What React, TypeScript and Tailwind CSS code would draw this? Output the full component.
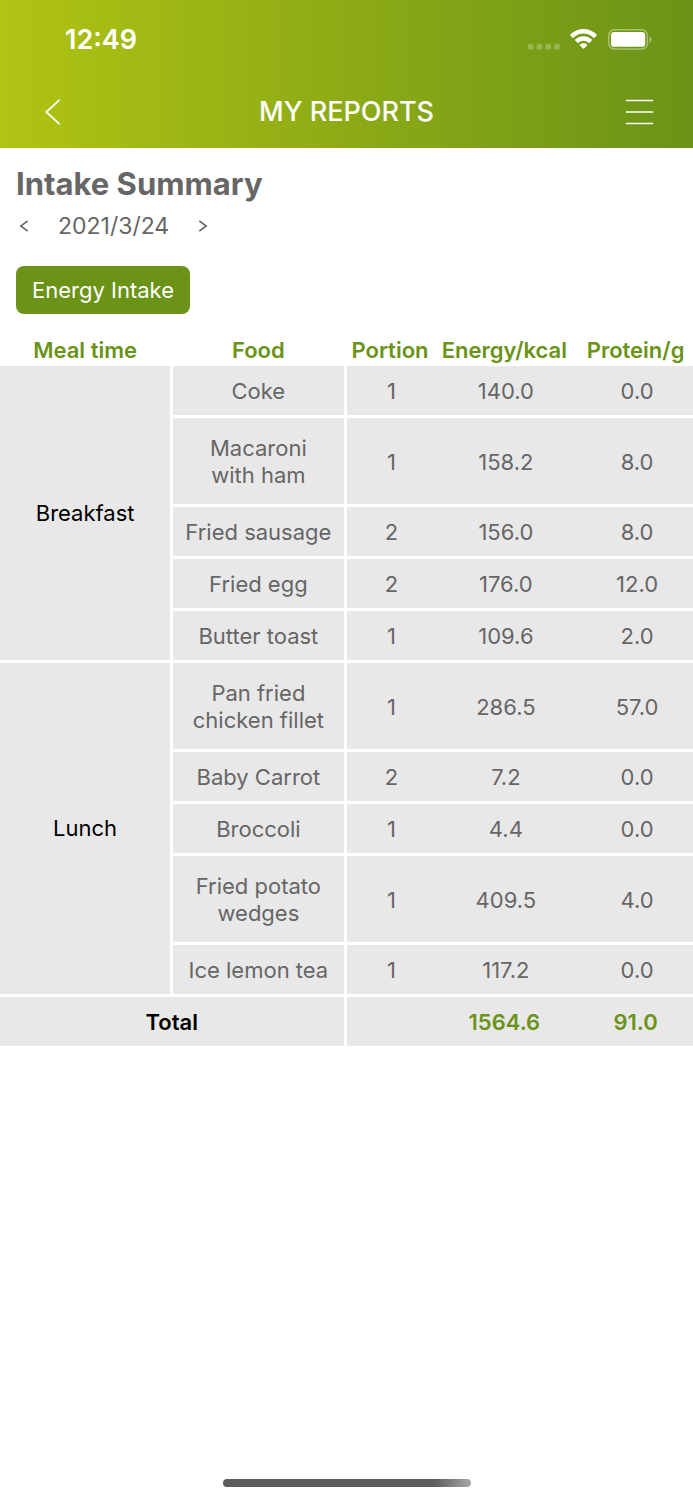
import { Fragment, useState } from 'react';
import clsx from 'clsx';

interface FoodItem {
  name: string;
  portion: number;
  energy: number;
  protein: number;
  tall?: boolean;
}

interface Meal {
  name: string;
  items: FoodItem[];
}

const meals: Meal[] = [
  {
    name: 'Breakfast',
    items: [
      { name: 'Coke', portion: 1, energy: 140, protein: 0 },
      { name: 'Macaroni with\u00a0ham', portion: 1, energy: 158.2, protein: 8, tall: true },
      { name: 'Fried sausage', portion: 2, energy: 156, protein: 8 },
      { name: 'Fried egg', portion: 2, energy: 176, protein: 12 },
      { name: 'Butter toast', portion: 1, energy: 109.6, protein: 2 },
    ],
  },
  {
    name: 'Lunch',
    items: [
      { name: 'Pan fried chicken fillet', portion: 1, energy: 286.5, protein: 57, tall: true },
      { name: 'Baby Carrot', portion: 2, energy: 7.2, protein: 0 },
      { name: 'Broccoli', portion: 1, energy: 4.4, protein: 0 },
      { name: 'Fried potato wedges', portion: 1, energy: 409.5, protein: 4, tall: true },
      { name: 'Ice lemon tea', portion: 1, energy: 117.2, protein: 0 },
    ],
  },
];

const cell = 'bg-[#e8e8e8] border-white border-b-[3px]';
const valueCell = 'bg-[#e8e8e8] border-white border-b-[3px] pt-[2px]';
const headCell = 'p-0 pr-[3px] pb-[2px] font-semibold';

function formatDate(d: Date) {
  return `${d.getFullYear()}/${d.getMonth() + 1}/${d.getDate()}`;
}

function StatusBar() {
  return (
    <div className="flex items-center justify-between h-20 pl-[65px] pr-[41px]">
      <span className="text-[27px] leading-8 font-semibold">12:49</span>
      <div className="flex items-center">
        <svg width="32" height="22" viewBox="0 0 32 22" className="mr-[10px]" fill="#fff" fillOpacity="0.25">
          <rect x="0" y="15" width="5.6" height="5.6" rx="1.6" />
          <rect x="8.7" y="15" width="5.6" height="5.6" rx="1.6" />
          <rect x="17.4" y="15" width="5.6" height="5.6" rx="1.6" />
          <rect x="26.1" y="15" width="5.6" height="5.6" rx="1.6" />
        </svg>
        <svg width="27" height="22" viewBox="0 0 27 22" className="mr-[11px]" fill="#fff">
          <path d="M13.5 0C8.5 0 3.800 2 .3 5.500c-.3.3-.3.7 0 1l2.200 2.200c.3.3.7.3 1 0C6.200 6 9.700 4.500 13.500 4.500s7.300 1.500 10 4.200c.3.300.7.300 1 0l2.200-2.200c.3-.3.3-.7 0-1C23.200 2 18.500 0 13.500 0Z" />
          <path d="M13.500 7.200c-3.200 0-6.100 1.200-8.300 3.300-.3.300-.3.700 0 1l2.300 2.200c.3.300.7.300 1 0 1.300-1.200 3.100-2 5-2s3.700.8 5 2c.3.300.7.300 1 0l2.300-2.200c.3-.3.3-.7 0-1C19.600 8.400 16.700 7.200 13.500 7.200Z" />
          <path d="M13.500 14.200c-1.400 0-2.600.5-3.600 1.300-.3.300-.3.700 0 1l3.100 3.100c.3.300.7.300 1 0l3.100-3.100c.3-.3.3-.7 0-1-1-.8-2.200-1.300-3.600-1.300Z" />
        </svg>
        <svg width="44" height="22" viewBox="0 0 44 22">
          <rect x="0.8" y="0.8" width="38.6" height="19.2" rx="5.6" fill="none" stroke="#fff" strokeOpacity="0.4" strokeWidth="1.5" />
          <rect x="3" y="3" width="34.2" height="14.8" rx="3.4" fill="#fff" />
          <path d="M41.6 7.400v6.400c1.200-.5 2-1.700 2-3.200s-.8-2.700-2-3.200Z" fill="#fff" fillOpacity="0.45" />
        </svg>
      </div>
    </div>
  );
}

export default function App() {
  const [date, setDate] = useState(new Date(2021, 2, 24));

  function moveDay(days: number) {
    setDate(new Date(date.getFullYear(), date.getMonth(), date.getDate() + days));
  }

  const allItems = meals.flatMap(m => m.items);
  const totalEnergy = allItems.reduce((sum, i) => sum + i.energy, 0);
  const totalProtein = allItems.reduce((sum, i) => sum + i.protein, 0);

  return (
    <div
      className="min-h-screen flex flex-col bg-white text-[#666666]"
      style={{ fontFamily: 'Inter, "Liberation Sans", sans-serif' }}
    >
      <header className="h-[148px] text-white bg-linear-to-r from-[#b1c313] to-[#6a9317]">
        <StatusBar />
        <div className="grid grid-cols-3 items-center h-16 px-[39px]">
          <button type="button" aria-label="Back" className="justify-self-start pl-[5px]">
            <svg width="18" height="28" viewBox="0 0 18 28" fill="none" stroke="#fff" strokeWidth="1.7">
              <path d="M15.6 1.8 2.2 14l13.4 12.2" />
            </svg>
          </button>
          <h1 className="text-[27px] leading-8 font-medium text-center whitespace-nowrap">MY REPORTS</h1>
          <button type="button" aria-label="Menu" className="justify-self-end">
            <svg width="29" height="28" viewBox="0 0 29 28" fill="none" stroke="#fff" strokeWidth="1.7" strokeLinecap="round">
              <path d="M1.5 2.5h26M1.5 14h26M1.5 25.5h26" />
            </svg>
          </button>
        </div>
      </header>

      <main>
        <div className="px-4 pt-[18px]">
          <h2 className="text-[31px] leading-9 font-bold">Intake Summary</h2>
          <div className="flex items-center mt-2 h-8">
            <button type="button" aria-label="Previous day" className="w-4 h-8 flex items-center justify-center" onClick={() => moveDay(-1)}>
              <svg width="10" height="12" viewBox="0 0 10 12" fill="none" stroke="currentColor" strokeWidth="1.6">
                <path d="M8.7.8 1.800 6l6.900 5.200" />
              </svg>
            </button>
            <span className="mx-[26px] text-[23px] leading-8">{formatDate(date)}</span>
            <button type="button" aria-label="Next day" className="w-4 h-8 flex items-center justify-center" onClick={() => moveDay(1)}>
              <svg width="10" height="12" viewBox="0 0 10 12" fill="none" stroke="currentColor" strokeWidth="1.6">
                <path d="M1.3.8 8.200 6l-6.900 5.200" />
              </svg>
            </button>
          </div>
          <button type="button" className="mt-6 h-12 px-4 rounded-lg bg-[#6a9317] text-white text-[22px] leading-[27px]">
            Energy Intake
          </button>
        </div>

        <table className="mt-[22px] w-full table-fixed border-separate border-spacing-0 text-[22px] leading-[27px] text-center">
          <colgroup>
            <col className="w-[25%]" />
            <col className="w-[25%]" />
            <col className="w-[13%]" />
            <col className="w-[20%]" />
            <col className="w-[17%]" />
          </colgroup>
          <thead>
            <tr className="h-[30px] text-[#6a9317] whitespace-nowrap">
              <th scope="col" className={headCell}>Meal time</th>
              <th scope="col" className={headCell}>Food</th>
              <th scope="col" className={headCell}>Portion</th>
              <th scope="col" className={headCell}>Energy/kcal</th>
              <th scope="col" className="p-0 pl-[3px] pb-[2px] font-semibold">Protein/g</th>
            </tr>
          </thead>
          <tbody>
            {meals.map(meal => (
              <Fragment key={meal.name}>
                {meal.items.map((item, i) => (
                  <tr key={item.name} className={item.tall ? 'h-[89px]' : 'h-[52px]'}>
                    {i === 0 && (
                      <th scope="rowgroup" rowSpan={meal.items.length} className={clsx(cell, 'border-r-[3px] font-normal text-black')}>
                        {meal.name}
                      </th>
                    )}
                    <td className={clsx(valueCell, 'border-r-[3px] px-2')}>{item.name}</td>
                    <td className={valueCell}>{item.portion}</td>
                    <td className={valueCell}>{item.energy.toFixed(1)}</td>
                    <td className={clsx(valueCell, 'pl-[6px]')}>{item.protein.toFixed(1)}</td>
                  </tr>
                ))}
              </Fragment>
            ))}
          </tbody>
          <tfoot>
            <tr className="h-[52px] text-[#6a9317] font-semibold">
              <th scope="row" colSpan={2} className={clsx(valueCell, 'border-r-[3px] font-semibold text-black')}>Total</th>
              <td className={valueCell}></td>
              <td className={clsx(valueCell, 'pr-[3px]')}>{totalEnergy.toFixed(1)}</td>
              <td className={clsx(valueCell, 'pl-[3px]')}>{totalProtein.toFixed(1)}</td>
            </tr>
          </tfoot>
        </table>
      </main>

      <div className="mt-auto pb-[13px] flex justify-center">
        <div className="w-[248px] h-2 rounded-full bg-linear-to-r from-[#5c5c5c] from-85% to-[#a8a8a8]" />
      </div>
    </div>
  );
}
